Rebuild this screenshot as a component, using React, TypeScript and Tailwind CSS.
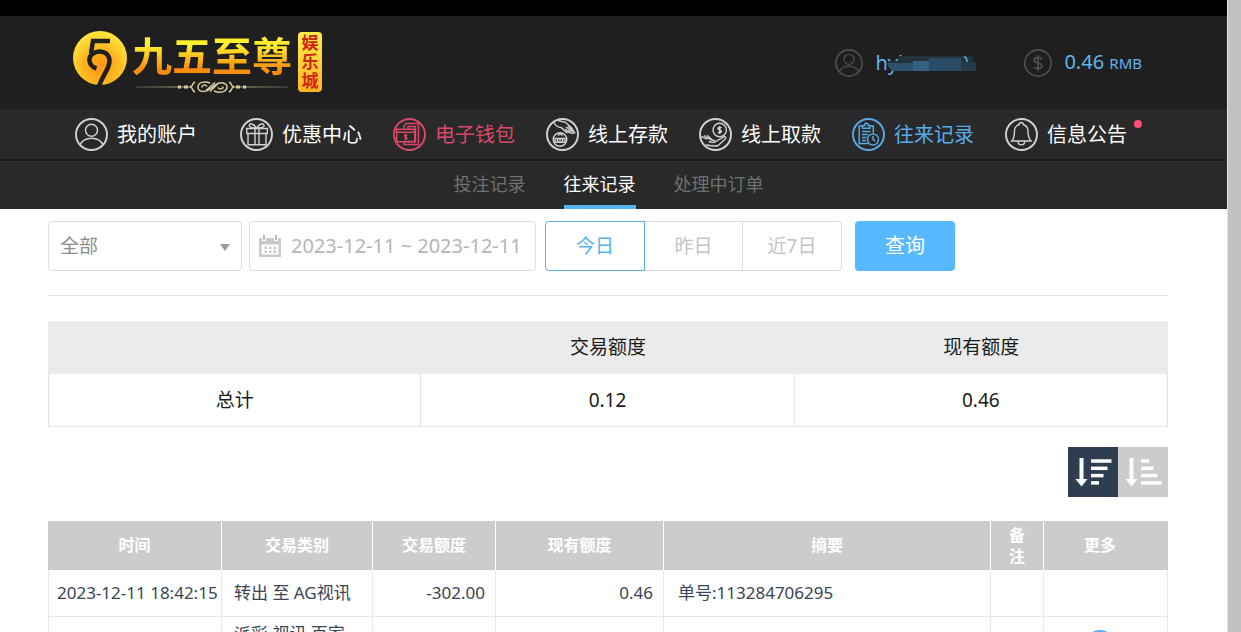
import React from 'react';
import clsx from 'clsx';

const ICONS = {
  account: (
    <>
      <circle cx="16.5" cy="12.2" r="6" />
      <path d="M5 27c2-4.400 6.500-6.800 11.500-6.800S26 22.600 28 27" />
    </>
  ),
  gift: (
    <>
      <path d="M6.700 10.500h20.600v5H6.700zM8 15.500h18v11.200H8zM15 10.500v16.200M19 10.500v16.200" />
      <path d="M16.500 10.300C12 10 8.500 9 9.300 7c1.400-2.600 5-.5 7.200 3.300C21 10 25 9 23.900 7c-1.300-2.600-5.200-.5-7.400 3.300" />
    </>
  ),
  wallet: (
    <>
      <path d="M11 11V8l2-2.500h12.500v21H11V24M15 11V8.500h7.500v15H15" />
      <path d="M3.700 11.300h18v12.400h-18zM3.700 14.200h18" />
      <path d="M14.300 17c-3-.9-3.600 1.300-1.500 2s1.300 2.700-1.500 2M12.800 16v6.200" />
    </>
  ),
  deposit: (
    <>
      <circle cx="14" cy="21.500" r="6.800" />
      <path d="M9 20.500h10v3.800H9zM11.500 20.500v3.800M14 20.500v3.800M16.500 20.500v3.800M12 17.500l2-2 2.500 2" />
      <path d="M8 3.500c.5 3.500 3 5.700 7.500 6.200l5 4.800 2.200-1.700 3.300 2.700 2.700-.7-3.200-5-6-5.500L12 2.500" />
      <path d="M20 9l6.500 4.800M19 11l5.300 4.300M22 8.200l5.500 5" />
    </>
  ),
  withdraw: (
    <>
      <circle cx="20.700" cy="12" r="6.700" />
      <path d="M22.700 9.700c-3.800-1.200-5 1.200-2 2.300s1.600 3.400-2 2.300M20.700 8v8" />
      <path d="M2.300 18.500l5.200 2.300c1.800-1.300 3.300.2 5 1.200 2 .3 3.800.5 3.300 1.800-.6 1-3.500.5-6-.3M15.800 24l9-5.200c2-.5 2.700.8 1.400 2.100l-7 6.600c-3 1.200-7 .4-12.200-.8M5 17.500l4.500 3M8 17.300l4.500 4" />
    </>
  ),
  records: (
    <>
      <path d="M10.500 8H7.200v17.500h9M18 8h3.300v7M10.500 10.300V7.500h2c0-3 3.700-3 3.700 0H18v2.800z" />
      <path d="M10 13.500h8.500M10 16.500h6M10 19.500h4.500M10 22.500h4" />
      <circle cx="21" cy="21.500" r="5.500" />
      <path d="M21 18v3.700l2.300 1.500" />
    </>
  ),
  bell: (
    <path d="M16.200 4.500c1.400 0 2 .7 2 2 3 1 4.800 3.300 4.800 6.500 0 5 .8 7.500 3 10H6.800c2.200-2.500 2.700-5 2.700-10 0-3.200 1.700-5.500 4.700-6.500 0-1.300.6-2 2-2zM13 23.300c0 4.700 6.800 4.700 6.800 0" />
  ),
  dollar: (
    <path d="M21 11.500c-3-2.500-9-1.700-9 1.700 0 4.300 9.200 2.300 9.200 6.700 0 3.300-6 4.200-9.400 1.500M16.500 7.500v18" strokeWidth="2" />
  ),
};

const NAV = [
  { label: '我的账户', icon: 'account', color: 'text-white', wide: true },
  { label: '优惠中心', icon: 'gift', color: 'text-white' },
  { label: '电子钱包', icon: 'wallet', color: 'text-[#d9486b]' },
  { label: '线上存款', icon: 'deposit', color: 'text-white' },
  { label: '线上取款', icon: 'withdraw', color: 'text-white' },
  { label: '往来记录', icon: 'records', color: 'text-[#57abe8]' },
  { label: '信息公告', icon: 'bell', color: 'text-white', dot: true },
] as { label: string; icon: keyof typeof ICONS; color: string; wide?: boolean; dot?: boolean }[];

const TABS = ['投注记录', '往来记录', '处理中订单'];

const COLUMNS = [
  { title: '时间', width: 'w-[174px] px-4' },
  { title: '交易类别', width: 'w-[151px] px-4' },
  { title: '交易额度', width: 'w-[123px] px-4' },
  { title: '现有额度', width: 'w-[168px] px-4' },
  { title: '摘要', width: 'px-4' },
  { title: '备注', width: 'w-[53px] px-4' },
  { title: '更多', width: 'w-[124px] pl-4 pr-7' },
];

const ROWS = [
  { time: '2023-12-11 18:42:15', type: '转出 至 AG视讯', amount: '-302.00', balance: '0.46', note: '单号:113284706295', more: false },
  { time: '', type: '派彩 视讯 百家乐', amount: '', balance: '', note: '', more: true },
];

function RoundIcon({ name, className }: { name: keyof typeof ICONS; className?: string }) {
  return (
    <svg viewBox="0 0 33 33" fill="none" stroke="currentColor" strokeWidth="1.4" className={clsx('shrink-0', className)} aria-hidden="true">
      <circle cx="16.5" cy="16.5" r="15.500" strokeWidth="1.900" />
      {ICONS[name]}
    </svg>
  );
}

function Logo() {
  return (
    <a href="#" className="h-[66px] flex items-start">
      <svg viewBox="0 0 56 56" className="w-14 h-14 mr-1" aria-hidden="true">
        <defs>
          <radialGradient id="coin" cx="0.5" cy="0.65" r="0.6">
            <stop offset="0" stopColor="#ff9414" />
            <stop offset="0.5" stopColor="#ffb31e" />
            <stop offset="1" stopColor="#ffe33c" />
          </radialGradient>
        </defs>
        <circle cx="28" cy="28" r="27" fill="url(#coin)" />
        <path d="M38 11H21L19 23.500" fill="none" stroke="#1f1f1f" strokeWidth="4.500" />
        <path d="M24.500 38.500C16.500 36 15.500 27.500 20.500 24c6.500-5 16.500-2 17 6.500 .2 8-6 13-10.500 25.500" fill="none" stroke="#1f1f1f" strokeWidth="4.500" />
      </svg>
      <div className="mt-1 flex flex-col items-center gap-0.5">
        <span className="text-[40px] leading-[44px] font-bold bg-linear-to-b from-[#fff02e] from-25% to-[#f78d0c] to-80% bg-clip-text text-transparent">九五至尊</span>
        <svg viewBox="0 0 152 14" className="w-[152px] h-[14px]" fill="none" stroke="#d9cda0" aria-hidden="true">
          <defs>
            <linearGradient id="rule" x1="0" x2="1">
              <stop offset="0" stopColor="#d9cda0" stopOpacity="0.3" />
              <stop offset="0.5" stopColor="#e8dcae" />
              <stop offset="1" stopColor="#d9cda0" stopOpacity="0.3" />
            </linearGradient>
          </defs>
          <path d="M0 6.500h55v1H0zM97 6.500h55v1H97z" fill="url(#rule)" stroke="none" />
          <path d="M42 7h3M48 7h4M100 7h4M107 7h3" strokeWidth="3" />
          <path d="M59 2c-4 2-1 4-5 5 4 1 1 3 5 5M93 2c4 2 1 4 5 5-4 1-1 3-5 5" strokeWidth="1.500" />
          <path d="M74 3c-5-2-12-1-12 4s7 6 12 2l5-4c6-4 12-2 12 2s-6 7-13 4M66 7.500c0-3 4-3 5-1M87 6.500c0 3-4 3-5 1M70 10.500l9-8M74 11.500l8-8" strokeWidth="1.500" />
        </svg>
      </div>
      <span className="mt-0.5 ml-[6px] w-6 h-[60px] flex items-center justify-center text-center rounded bg-linear-to-b from-[#fff04a] to-[#ffb522] text-[17px] leading-[19px] font-bold text-[#d02513] break-all">
        娱乐城
      </span>
    </a>
  );
}

function SortIcon({ bars }: { bars: number[] }) {
  return (
    <svg viewBox="0 0 50 50" className="w-full h-full" fill="none" stroke="#fff" aria-hidden="true">
      <path d="M13.500 11v22" strokeWidth="4" />
      <path d="M7.500 32h12l-6 7.500z" fill="#fff" stroke="none" />
      {bars.map((end, i) => (
        <path key={i} d={`M23 ${14 + i * 7.3}H${end}`} strokeWidth="3.500" />
      ))}
    </svg>
  );
}

export default function App() {
  return (
    <div className="h-screen flex overflow-hidden bg-white font-['Noto_Sans','Noto_Sans_CJK_SC',sans-serif]">
      <div className="flex-1 min-w-0 overflow-hidden border-r border-[#e5e5e5]">
        {/* Header */}
        <header className="bg-[#1f1f1f] border-t-16 border-black">
          <div className="h-[93px] pl-[72px] pr-[85px] flex items-center justify-between">
            <Logo />
            <div className="flex items-center gap-12 text-[#62b2ec]">
              <div className="flex items-center gap-3">
                <RoundIcon name="account" className="w-7 h-7 text-[#505050]" />
                <div className="relative w-[101px] text-[20px] leading-7">
                  hyl
                  {/* masked part of the user name */}
                  <svg viewBox="0 0 94 20" className="absolute left-2 top-1 w-[94px] h-5" aria-hidden="true">
                    <path d="M15 3h75v7H15z" fill="#26323b" />
                    <path d="M6 8h10v4H5z" fill="#22303a" />
                    <path d="M4 10h26v8H10l-4-3z" fill="#2d516d" />
                    <path d="M30 8h16v10H30z" fill="#35607f" />
                    <path d="M46 5h32v13H46z" fill="#2b4c66" />
                    <path d="M78 9h15v9H78z" fill="#273a48" />
                    <path d="M81 4c2 0 3 2 3 5" stroke="#62b2ec" strokeWidth="1.500" fill="none" />
                  </svg>
                </div>
              </div>
              <div className="flex items-center gap-3">
                <RoundIcon name="dollar" className="w-7 h-7 text-[#505050]" />
                <span className="text-[20px] leading-7">0.46 <span className="text-[15px]">RMB</span></span>
              </div>
            </div>
          </div>
        </header>

        {/* Main nav */}
        <nav className="bg-[#292929] h-[52px] border-b-2 border-[#1a1a1a] pl-[75px] flex items-center gap-[31px]">
          {NAV.map((item) => (
            <a key={item.label} href="#" className={clsx('relative flex items-center gap-[9px] text-[20px] leading-7 whitespace-nowrap', item.color, item.wide && 'mr-3')}>
              <RoundIcon name={item.icon} className={clsx('w-[33px] h-[33px]', item.color === 'text-white' && 'text-[#d2d2d2]')} />
              <span className="pt-0.5">{item.label}</span>
              {item.dot && <span className="absolute -right-[15px] top-0.5 w-2 h-2 rounded-full bg-[#ff4f78]" />}
            </a>
          ))}
        </nav>

        {/* Sub nav */}
        <nav className="bg-[#292929] h-12 pr-[10px] border-t border-[#333] flex justify-center gap-[38px] text-[18px]">
          {TABS.map((tab, i) => (
            <a key={tab} href="#" className={clsx('pt-px leading-[42px] border-b-4', i === 1 ? 'text-white border-[#57b5f5]' : 'text-[#707070] border-transparent')}>
              {tab}
            </a>
          ))}
        </nav>

        <main className="pl-12 pr-[59px] pt-3">
          {/* Filters */}
          <form className="flex items-center pb-6 border-b border-[#e8e8e8] text-[19px] text-[#b5b5b5]" onSubmit={(e) => e.preventDefault()}>
            <div className="relative w-[194px] mr-[7px]">
              <select aria-label="类别" className="appearance-none w-full h-[50px] pl-[11px] rounded border border-[#dcdcdc] bg-white text-[#8c8c8c]">
                <option>全部</option>
              </select>
              <svg viewBox="0 0 10 7" className="absolute right-3 top-[23px] w-[10px] h-[7px] pointer-events-none" aria-hidden="true">
                <path d="M0 0h10L5 7z" fill="#999" />
              </svg>
            </div>
            <label className="w-[287px] h-[50px] mr-[9px] px-[9px] flex items-center gap-[10px] rounded border border-[#dcdcdc]">
              <svg viewBox="0 0 22 22" className="w-[22px] h-[22px] shrink-0" aria-hidden="true">
                <path d="M0 3h3v3h4V3h8v3h4V3h3v19H0z" fill="#c9c9c9" />
                <path d="M7 3h8v4H7z" fill="#c9c9c9" />
                <path d="M4 0h2v5H4zM16 0h2v5h-2z" fill="#bdbdbd" />
                <path d="M2.500 9.500h17v10h-17z" fill="#fff" />
                <path d="M5.500 11.500h2.500v2.500H5.500zM10 11.500h2.500v2.500H10zM14.500 11.500h2.500v2.500h-2.500zM5.500 15.500h2.500v2.500H5.500zM10 15.500h2.500v2.500H10zM14.500 15.500h2.500v2.500h-2.500z" fill="#c9c9c9" />
              </svg>
              <input type="text" readOnly aria-label="日期" value="2023-12-11 ~ 2023-12-11" className="min-w-0 w-full text-[20px] outline-none" />
            </label>
            <div className="flex mr-[13px]">
              <button type="button" className="w-[100px] h-[50px] rounded-l border border-[#57aee8] text-[#57b2f2]">今日</button>
              <button type="button" className="w-[98px] h-[50px] border-y border-r border-[#dcdcdc] text-[#c4c4c4]">昨日</button>
              <button type="button" className="w-[99px] h-[50px] rounded-r border-y border-r border-[#dcdcdc] text-[#c4c4c4]">近7日</button>
            </div>
            <button type="submit" className="w-[100px] h-[50px] rounded bg-[#57b9ff] text-white text-[20px]">查询</button>
          </form>

          {/* Totals */}
          <table className="mt-[25px] w-full table-fixed border-separate border-spacing-0 text-[19px] text-[#1a1a1a] text-center">
            <thead>
              <tr className="h-[53px] bg-[#ebebeb]">
                <td></td>
                <th className="font-normal">交易额度</th>
                <th className="font-normal">现有额度</th>
              </tr>
            </thead>
            <tbody>
              <tr className="h-[53px] *:border-r *:border-b *:border-[#e4e4e4]">
                <td className="border-l">总计</td>
                <td>0.12</td>
                <td>0.46</td>
              </tr>
            </tbody>
          </table>

          {/* Sort order */}
          <div className="flex justify-end mt-5">
            <button type="button" aria-label="降序" className="w-[50px] h-[50px] bg-[#2f3d50]"><SortIcon bars={[43.5, 39.5, 35.5, 31]} /></button>
            <button type="button" aria-label="升序" className="w-[50px] h-[50px] bg-[#ccc]"><SortIcon bars={[31, 35.5, 39.5, 43.5]} /></button>
          </div>

          {/* Records */}
          <table className="mt-6 w-full table-fixed border-separate border-spacing-0 text-[17px] leading-6 text-[#3a4454]">
            <thead>
              <tr className="h-[49px] bg-[#ccc] text-white text-[16px] leading-[21px]">
                {COLUMNS.map((col) => (
                  <th key={col.title} className={clsx('font-bold border-r border-white last:border-r-0', col.width)}>{col.title}</th>
                ))}
              </tr>
            </thead>
            <tbody>
              {ROWS.map((row) => (
                <tr key={row.type} className="h-[47px] *:border-r *:border-b *:border-[#e8e8e8]">
                  <td className="border-l pl-2 whitespace-nowrap">{row.time}</td>
                  <td className="pl-3 pr-4 py-[5px]">{row.type}</td>
                  <td className="px-[10px] text-right">{row.amount}</td>
                  <td className="px-[10px] text-right">{row.balance}</td>
                  <td className="px-[14px]">{row.note}</td>
                  <td></td>
                  <td className="pl-4 pr-7">
                    {row.more && <button type="button" aria-label="更多" className="block mx-auto w-8 h-8 rounded-full bg-[#57aeee]"></button>}
                  </td>
                </tr>
              ))}
            </tbody>
          </table>
        </main>
      </div>
      {/* Scrollbar */}
      <div className="w-[13px] shrink-0 bg-[#c1c1c1]" />
    </div>
  );
}
